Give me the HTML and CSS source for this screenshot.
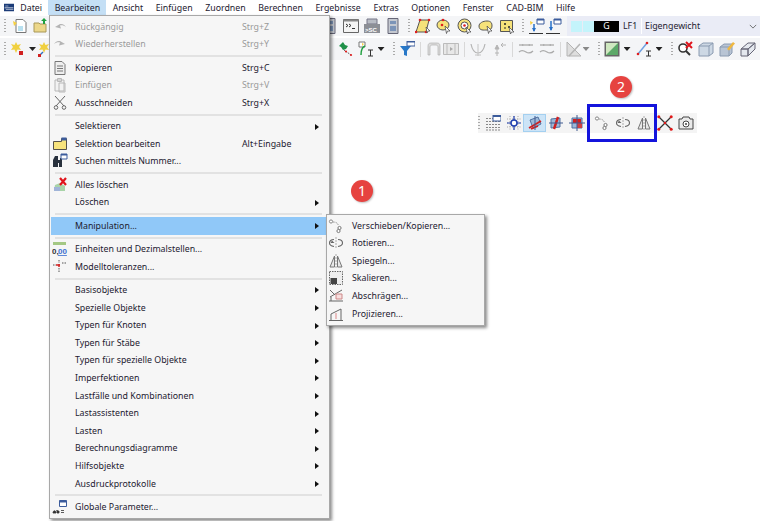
FILE: index.html
```html
<!DOCTYPE html>
<html lang="de">
<head>
<meta charset="utf-8">
<title>Bearbeiten</title>
<link rel="stylesheet" href="styles.css">
</head>
<body>
<svg class="defs" width="0" height="0">
  <defs>
    <symbol id="undo" viewBox="0 0 16 16"><path d="M3 8 8 5c3-.5 5 1 6 3-2-1.500-4-2-6-1.500l1 3z" fill="#b4b4b4"/></symbol>
    <symbol id="redo" viewBox="0 0 16 16"><path d="M13 8 8 5C5 4.500 3 6 2 8c2-1.500 4-2 6-1.500l-1 3z" fill="#b4b4b4"/></symbol>
    <symbol id="copy" viewBox="0 0 16 16"><path d="M3 1.500h7l3 3v10H3zM5 6h6M5 8.500h6M5 11h6" fill="#eee" stroke="#777"/></symbol>
    <symbol id="paste" viewBox="0 0 16 16"><path d="M3 3h9v11H3z M7 6h6v9H7zM5.500 1.500h4v3h-4z" fill="#f2f2f2" stroke="#b8b8b8"/></symbol>
    <symbol id="scissors" viewBox="0 0 16 16"><path d="M3 1l9 10M13 1 4 11" stroke="#666" fill="none"/><circle cx="4" cy="12.500" r="1.800" fill="none" stroke="#666"/><circle cx="12" cy="12.500" r="1.800" fill="none" stroke="#666"/></symbol>
    <symbol id="selfolder" viewBox="0 0 16 16"><path d="M1.500 5.500h8v-3h5v11h-13z" fill="#f7e37c" stroke="#56524a"/><path d="M9.500 1.500h5v3h-5z" fill="#3c5c9c"/></symbol>
    <symbol id="binoc" viewBox="0 0 16 16"><path d="M1 14V7l2-4h3v4h2V5h2v9H7v-4H6v4z" fill="#28303c"/><path d="M9 1h6v5H9z" fill="#fff" stroke="#3c5c9c"/><path d="M9 1h6v1.500H9z" fill="#3c5c9c"/></symbol>
    <symbol id="clear" viewBox="0 0 16 16"><path d="M2 14l1-6 5-2 5 3v5z" fill="#a8d4a8"/><path d="M2 10h6v4H2z" fill="#a0b4d8"/><path d="m8 1 6 7m0-7-6 7" stroke="#e0141c" stroke-width="2.200"/></symbol>
    <symbol id="units" viewBox="0 0 16 16"><path d="M1 1h13v3H1z" fill="#a4c884"/><text x="0" y="13" class="ic-t">0,</text><text x="6" y="13" class="ic-b">00</text></symbol>
    <symbol id="toler" viewBox="0 0 16 16"><path d="M7 1v3M7 9v5M1 6h3M10 4h5" stroke="#555" fill="none" stroke-dasharray="1.500 1"/><path d="M7 5v3M4 6h4" stroke="#d02020" stroke-width="1.500"/></symbol>
    <symbol id="param" viewBox="0 0 16 16"><path d="M7.500 1.500h7v6h-7z" fill="#fff" stroke="#3c5c9c"/><path d="M7.500 1.500h7v2h-7z" fill="#3c5c9c"/><path d="M1 14c0-3 3-3 3 0zM5 11v3h2v-2H5zM9 11.500h3M9 13.500h3" fill="#333" stroke="#333" stroke-width=".8"/></symbol>
    <symbol id="move" viewBox="0 0 16 16"><circle cx="3" cy="3.500" r="1.600" fill="#fff" stroke="#888"/><circle cx="11.500" cy="10" r="1.600" fill="#fff" stroke="#777"/><circle cx="10.500" cy="13" r="1.600" fill="#fff" stroke="#777"/><path d="M5 4c3 0 5 1 5.500 4" fill="none" stroke="#999" stroke-dasharray="1.500 1"/></symbol>
    <symbol id="rotate" viewBox="0 0 16 16"><path d="M8 2v12" stroke="#aaa" stroke-dasharray="2 1"/><path d="M6 4.500C3 4.500 1.500 6 1.500 8S3 11 6 11.500M10 4.500c3 0 4.500 1.500 4.500 3.500S13 11 10 11.500" fill="none" stroke="#666" stroke-width="1.100"/><path d="M4 5.500 6.500 8H2.500z" fill="#666"/></symbol>
    <symbol id="mirror" viewBox="0 0 16 16"><path d="M6.500 3 2 14h4.500zM9.500 3 14 14H9.500z" fill="#e8e8e8" stroke="#777"/><path d="M8 1v14" stroke="#aaa" stroke-dasharray="2 1"/></symbol>
    <symbol id="scale" viewBox="0 0 16 16"><path d="M1.500 1.500h13v13h-13z" fill="#eee" stroke="#666" stroke-dasharray="1.500 1"/><path d="M2.500 8h6.500v6H2.500z" fill="#444"/></symbol>
    <symbol id="shear" viewBox="0 0 16 16"><path d="M1 13h14M3 13V9M14 2 2 9" stroke="#666" fill="none"/><path d="M2 2l5 5" stroke="#666"/><path d="M8 6h6v5H8z" fill="#f7dede" stroke="#c88"/></symbol>
    <symbol id="project" viewBox="0 0 16 16"><path d="M1 14.500h14M3 14.500V8l10-5v11.500" fill="none" stroke="#666"/><path d="M8 7v6" stroke="#d88"/></symbol>
    <symbol id="doc" viewBox="0 0 16 16"><path d="M4 1.500h7l3 3v10H4z" fill="#fff" stroke="#777"/><path d="M1 3l4 2-3 3z" fill="#f6d040"/><path d="M6 8h5v5H6z" fill="#b8e0f0"/></symbol>
    <symbol id="folder" viewBox="0 0 16 16"><path d="M1 5h5l1 1h6v8H1z" fill="#ecd78a" stroke="#a89858"/><path d="M11 0l3 3h-2v3h-2V3H8z" fill="#20a040"/></symbol>
    <symbol id="star" viewBox="0 0 16 16"><path d="M6 1l1.500 3L11 3 9 6l2 3-3.500-.5L6 12 4.500 8.500 1 9l2-3-2-3 3.500 1z" fill="#f0d040"/><path d="M9 10h4v4H9z" fill="#d02020"/></symbol>
    <symbol id="star2" viewBox="0 0 16 16"><path d="M6 1l1.500 3L11 3 9 6l2 3-3.500-.5L6 12 4.500 8.500 1 9l2-3-2-3 3.500 1z" fill="#f0d040"/><path d="M1 15l4-4" stroke="#3070c0" stroke-width="1.500"/><path d="M0 13h3v3H0z" fill="#d02020"/></symbol>
    <symbol id="cmd" viewBox="0 0 16 16"><path d="M.500 1.500h15v13H.500z" fill="#f4f4f4" stroke="#666"/><path d="M.500 1.500h15v2H.500z" fill="#888"/><path d="m3 6 2 1.500L3 9m3-3 2 1.500L6 9m3 1.500h3" fill="none" stroke="#333"/></symbol>
    <symbol id="sc" viewBox="0 0 16 16"><path d="M3 1h10v5H3z" fill="#b8bcc4" stroke="#778"/><path d="M0 6h16v9H0z" fill="#8c8f96"/><text x="1" y="13.500" class="ic-s">&gt;SC</text></symbol>
    <symbol id="form" viewBox="0 0 16 16"><path d="M3 .500h10v15H3z" fill="#c4c8d0" stroke="#667"/><path d="M5 3h6v3H5zM5 8h6v5H5z" fill="#7c94b8"/></symbol>
    <symbol id="poly" viewBox="0 0 16 16"><path d="M5 2h9l-3 12H1z" fill="#f6e27a" stroke="#555"/><g fill="#e02020"><circle cx="5" cy="2" r="1.300"/><circle cx="14" cy="2" r="1.300"/><circle cx="1" cy="14" r="1.300"/><circle cx="11" cy="14" r="1.300"/></g><path d="m11 9 4 4-2 0-1 2z" fill="#fff" stroke="#444" stroke-width=".7"/></symbol>
    <symbol id="ell" viewBox="0 0 16 16"><ellipse cx="7" cy="7" rx="6" ry="5" fill="#f6e27a" stroke="#555"/><circle cx="7" cy="2" r="1.300" fill="#e02020"/><circle cx="6" cy="7" r="1.300" fill="#e02020"/><path d="m9 8 5 5-2.500 0-1 2.500z" fill="#fff" stroke="#444" stroke-width=".7"/></symbol>
    <symbol id="ring" viewBox="0 0 16 16"><circle cx="7.500" cy="7.500" r="6.500" fill="#f6e27a" stroke="#555"/><circle cx="7.500" cy="7.500" r="3.500" fill="#fff" stroke="#555"/><circle cx="7.500" cy="7.500" r="1.300" fill="#e02020"/><path d="m9 9 5 5-2.500 0-1 2z" fill="#fff" stroke="#444" stroke-width=".7"/></symbol>
    <symbol id="blob" viewBox="0 0 16 16"><path d="M1 8c0-3 4-5 8-5s5 2 5 5-2 4-5 4-8 1-8-4z" fill="#f6e27a" stroke="#555"/><path d="m9 8 5 5-2.500 0-1 2.500z" fill="#fff" stroke="#444" stroke-width=".7"/></symbol>
    <symbol id="grid2" viewBox="0 0 16 16"><path d="M1.500 2.500h12v11h-12z" fill="#f6e27a" stroke="#555"/><path d="M5 6h2M6 5v2M9 9h2M10 8v2M5 10h2" stroke="#222"/><path d="m10 9 5 5-2.500 0-1 2z" fill="#fff" stroke="#444" stroke-width=".7"/></symbol>
    <symbol id="loadup" viewBox="0 0 16 16"><path d="M8 1h7v5H8z" fill="#fff" stroke="#3c5c9c"/><path d="M8 1h7v1.500H8z" fill="#3c5c9c"/><path d="M1 3l3 1.500L1.500 7z" fill="#f6d040"/><path d="M5 6v7" stroke="#2870c8" stroke-width="1.500"/><path d="m3 10 2 4 2-4z" fill="#2870c8"/><path d="M0 15.500h14" stroke="#333"/></symbol>
    <symbol id="loaddn" viewBox="0 0 16 16"><path d="M8 1h7v5H8z" fill="#fff" stroke="#3c5c9c"/><path d="M8 1h7v1.500H8z" fill="#3c5c9c"/><path d="M5 3v9" stroke="#2870c8" stroke-width="1.500"/><path d="m3 9 2 4 2-4z" fill="#2870c8"/><path d="M0 15.500h14" stroke="#333"/></symbol>
    <symbol id="green" viewBox="0 0 16 16"><path d="M6 1l2 3 3 1-2 3-3 1-2-3-2-1 2-2z" fill="#1e9048"/><path d="M7 9l7 5" stroke="#555" stroke-dasharray="1.500 1"/><g fill="#e02020"><circle cx="9" cy="10.500" r="1.100"/><circle cx="14" cy="14" r="1.100"/></g></symbol>
    <symbol id="wiz" viewBox="0 0 16 16"><path d="M1 1h6v5H1z" fill="#fff" stroke="#777"/><path d="M3 14C3 9 4 6 7 5" fill="none" stroke="#20a040" stroke-width="1.500"/><path d="M4 2l2 1-2 2z" fill="#f6d040"/><path d="M10 9h5M12.500 9v6M10 15h5" stroke="#333" fill="none"/></symbol>
    <symbol id="funnel" viewBox="0 0 16 16"><path d="M1 5h11L8 10v5l-3-1v-4z" fill="#2878c8"/><path d="M8 0h8v5H8z" fill="#fff" stroke="#3c5c9c"/><path d="M8 0h8v1.500H8z" fill="#3c5c9c"/></symbol>
    <symbol id="arch" viewBox="0 0 16 16"><path d="M2 14V5c0-2 1-3 3-3h6c2 0 3 1 3 3v9h-2V6c0-1-1-2-2-2H6C5 4 4 5 4 6v8z" fill="#dcdcdc" stroke="#aaa" stroke-width=".6"/></symbol>
    <symbol id="film" viewBox="0 0 16 16"><path d="M.500 2.500h15v11H.500z" fill="#e8e8e8" stroke="#bbb"/><path d="M4 2.500v11M12 2.500v11" stroke="#bbb"/><path d="m7 6 3 2-3 2z" fill="#aaa"/></symbol>
    <symbol id="curve" viewBox="0 0 16 16"><path d="M1 3c1 5 3 9 7 9s6-4 7-9" fill="none" stroke="#b4b4b4" stroke-width="1.200"/><path d="M8 3v12M5 14h6" stroke="#c4c4c4"/></symbol>
    <symbol id="upar" viewBox="0 0 16 16"><path d="M6 6v9M4 12h4M4 8l2-4 2 4z" stroke="#b4b4b4" fill="#b4b4b4"/><path d="M10 4h5M12 2 10 4l2 2" stroke="#b4b4b4" fill="none"/></symbol>
    <symbol id="beam" viewBox="0 0 16 16"><path d="M1 4h14" stroke="#b4b4b4" stroke-width="1.500" stroke-dasharray="4 1"/><path d="M1 11c2-2 4-2 7 0s5 1 7-1" fill="none" stroke="#aaa" stroke-width="1.200"/><circle cx="5" cy="4" r="1" fill="#aaa"/><circle cx="11" cy="4" r="1" fill="#aaa"/></symbol>
    <symbol id="angle" viewBox="0 0 16 16"><path d="M1 1v14h14z" fill="#dedede" stroke="#b4b4b4"/><path d="M3 15 14 3" stroke="#b4b4b4" stroke-width="1.500"/></symbol>
    <symbol id="gradbox" viewBox="0 0 16 16"><path d="M.500 .500h15v15H.500z" fill="#666"/><path d="M2 2h12v12H2z" fill="#cfe8c0"/><path d="M14 2v12H2z" fill="#5ca868"/></symbol>
    <symbol id="linei" viewBox="0 0 16 16"><path d="M2 13 11 2" stroke="#70a0e0" stroke-width="1.500"/><circle cx="2" cy="13" r="1.300" fill="#e02020"/><circle cx="11" cy="2" r="1.300" fill="#e02020"/><path d="M10 10h5M12.500 10v5M10 15h5" stroke="#333" fill="none"/></symbol>
    <symbol id="searchx" viewBox="0 0 16 16"><circle cx="6" cy="7" r="4" fill="#fff" stroke="#333" stroke-width="1.600"/><path d="m9 10 4 4" stroke="#333" stroke-width="2"/><path d="m9 1 6 6m0-6-6 6" stroke="#e0141c" stroke-width="2"/></symbol>
    <symbol id="cube" viewBox="0 0 16 16"><path d="M1 5l4-3h10v10l-4 3H1zM1 5h10v10M11 5l4-3" fill="#cdd8e4" stroke="#8a9ab0"/></symbol>
    <symbol id="cubepen" viewBox="0 0 16 16"><path d="M1 6l4-3h8v9l-3 3H1zM1 6h9v9M10 6l3-3" fill="#b8c4d4" stroke="#8a9ab0"/><path d="m8 8 6-7 2 1.500-6 7z" fill="#f0b840"/></symbol>
    <symbol id="cubetube" viewBox="0 0 16 16"><path d="M1 8h7v7H1zM1 8l7-6h7l-7 6zM8 8l7-6v6l-7 7z" fill="#e4e8ee" stroke="#667"/></symbol>
    <symbol id="gridw" viewBox="0 0 16 16"><path d="M1 3.500h2M4 3.500h2M7 3.500h2M1 6.500h14M1 9.500h14M1 12.500h14M1 15h14" stroke="#888" stroke-dasharray="2 1"/><path d="M8 0h8v6H8z" fill="#fff" stroke="#3c5c9c"/><path d="M8 0h8v2H8z" fill="#3c5c9c"/></symbol>
    <symbol id="node" viewBox="0 0 16 16"><path d="M1 4h14M1 8h14M1 12h14M4 1v14M8 1v14M12 1v14" stroke="#aaa" stroke-dasharray="1 1.500"/><path d="M8 1v14M1 8h14" stroke="#2040b0" stroke-width="1.200"/><circle cx="8" cy="8" r="3" fill="#fff" stroke="#2040b0" stroke-width="1.500"/></symbol>
    <symbol id="pln1" viewBox="0 0 16 16"><path d="M3 5l8-3 3 7-8 4z" fill="#9cb8d8" stroke="#5070a0"/><path d="M2 13 14 6M4 14l7-3" stroke="#d02020" stroke-width="1.800"/><path d="M8 1v14" stroke="#405a90"/></symbol>
    <symbol id="pln2" viewBox="0 0 16 16"><path d="M3 4l9-1v9l-9 1z" fill="#9cb8d8" stroke="#5070a0"/><path d="M10 2 6 14" stroke="#d02020" stroke-width="2.400"/><path d="M1 8h14" stroke="#405a90"/></symbol>
    <symbol id="pln3" viewBox="0 0 16 16"><path d="M3 3h10v10H3z" fill="#9cb8d8" stroke="#5070a0"/><path d="M4 4h8v4H4z" fill="#d02020"/><path d="M8 8h5v5H8z" fill="#d04040"/><path d="M8 0v16M0 8h16" stroke="#405a90"/></symbol>
    <symbol id="crossx" viewBox="0 0 16 16"><path d="m1.500 1.500 13 13m0-13-13 13" stroke="#333" stroke-width="1.300"/><g fill="#e01818"><circle cx="1.800" cy="1.800" r="1.500"/><circle cx="14.200" cy="1.800" r="1.500"/><circle cx="1.800" cy="14.200" r="1.500"/><circle cx="14.200" cy="14.200" r="1.500"/><circle cx="8" cy="8" r="1.200"/></g></symbol>
    <symbol id="camera" viewBox="0 0 16 16"><path d="M1 4h3l1-2h6l1 2h3v10H1z" fill="#eaeaea" stroke="#444"/><circle cx="8" cy="9" r="3" fill="#fff" stroke="#444"/><circle cx="8" cy="9" r="1" fill="#444"/></symbol>
  </defs>
</svg>

<header class="menubar">
  <svg class="applogo" viewBox="0 0 16 12"><path d="M0 0h16v12H0z" fill="#1c3c78"/><path d="M2 3h5v1H2zM1 6h14v1H1zM3 9h12v1H3z" fill="#fff"/></svg>
  <span class="mb-item">Datei</span>
  <span class="mb-item mb-open">Bearbeiten</span>
  <span class="mb-item">Ansicht</span>
  <span class="mb-item">Einfügen</span>
  <span class="mb-item">Zuordnen</span>
  <span class="mb-item">Berechnen</span>
  <span class="mb-item">Ergebnisse</span>
  <span class="mb-item">Extras</span>
  <span class="mb-item">Optionen</span>
  <span class="mb-item">Fenster</span>
  <span class="mb-item">CAD-BIM</span>
  <span class="mb-item">Hilfe</span>
</header>

<div class="toolbars">
  <div class="tb tb1">
    <i class="grip"></i>
    <svg class="ic"><use href="#doc"/></svg>
    <svg class="ic"><use href="#folder"/></svg>
    <span class="tb-under tb1-under"></span>
    <svg class="ic"><use href="#form"/></svg>
    <svg class="ic"><use href="#cmd"/></svg>
    <svg class="ic"><use href="#sc"/></svg>
    <svg class="ic"><use href="#form"/></svg>
    <i class="grip"></i>
    <svg class="ic"><use href="#poly"/></svg>
    <svg class="ic"><use href="#ell"/></svg>
    <svg class="ic"><use href="#ring"/></svg>
    <svg class="ic"><use href="#blob"/></svg>
    <svg class="ic"><use href="#grid2"/></svg>
    <i class="grip"></i>
    <svg class="ic"><use href="#loadup"/></svg>
    <svg class="ic ic-tight"><use href="#loaddn"/></svg>
    <div class="lf">
      <span class="sw"></span><span class="sw"></span>
      <span class="lf-g">G</span>
      <span class="lf-n">LF1</span>
      <span class="lf-d">Eigengewicht</span>
      <svg class="chev" viewBox="0 0 10 6"><path d="m1 1 4 4 4-4" fill="none" stroke="#555"/></svg>
    </div>
  </div>
  <div class="tb tb2">
    <i class="grip"></i>
    <svg class="ic"><use href="#star"/></svg>
    <i class="drop drop-near"></i>
    <svg class="ic"><use href="#star2"/></svg>
    <span class="tb-under tb2-under"></span>
    <svg class="ic"><use href="#green"/></svg>
    <svg class="ic"><use href="#wiz"/></svg>
    <i class="drop"></i>
    <i class="grip"></i>
    <svg class="ic"><use href="#funnel"/></svg>
    <i class="bar"></i>
    <svg class="ic"><use href="#arch"/></svg>
    <svg class="ic ic-tight"><use href="#film"/></svg>
    <i class="bar"></i>
    <svg class="ic"><use href="#curve"/></svg>
    <svg class="ic"><use href="#upar"/></svg>
    <i class="bar"></i>
    <svg class="ic"><use href="#beam"/></svg>
    <svg class="ic"><use href="#beam"/></svg>
    <i class="bar"></i>
    <svg class="ic"><use href="#angle"/></svg>
    <i class="drop off"></i>
    <i class="grip"></i>
    <svg class="ic"><use href="#gradbox"/></svg>
    <i class="drop"></i>
    <svg class="ic"><use href="#linei"/></svg>
    <i class="drop"></i>
    <i class="grip"></i>
    <svg class="ic"><use href="#searchx"/></svg>
    <svg class="ic"><use href="#cube"/></svg>
    <svg class="ic"><use href="#cubepen"/></svg>
    <svg class="ic"><use href="#cubetube"/></svg>
  </div>
</div>

<div class="float-tb">
  <i class="grip"></i>
  <svg class="ic"><use href="#gridw"/></svg>
  <svg class="ic"><use href="#node"/></svg>
  <span class="ic-on"><svg class="ic"><use href="#pln1"/></svg></span>
  <svg class="ic"><use href="#pln2"/></svg>
  <svg class="ic"><use href="#pln3"/></svg>
  <svg class="ic gap-l"><use href="#move"/></svg>
  <svg class="ic"><use href="#rotate"/></svg>
  <svg class="ic"><use href="#mirror"/></svg>
  <svg class="ic"><use href="#crossx"/></svg>
  <svg class="ic"><use href="#camera"/></svg>
</div>
<div class="frame"></div>
<span class="badge badge-1">1</span>
<span class="badge badge-2">2</span>

<nav class="menu main-menu">
  <div class="mi off"><svg class="mic"><use href="#undo"/></svg><span class="lb">Rückgängig</span><span class="sc">Strg+Z</span></div>
  <div class="mi off"><svg class="mic"><use href="#redo"/></svg><span class="lb">Wiederherstellen</span><span class="sc">Strg+Y</span></div>
  <hr class="sep">
  <div class="mi"><svg class="mic"><use href="#copy"/></svg><span class="lb">Kopieren</span><span class="sc">Strg+C</span></div>
  <div class="mi off"><svg class="mic"><use href="#paste"/></svg><span class="lb">Einfügen</span><span class="sc">Strg+V</span></div>
  <div class="mi"><svg class="mic"><use href="#scissors"/></svg><span class="lb">Ausschneiden</span><span class="sc">Strg+X</span></div>
  <hr class="sep">
  <div class="mi sub"><span class="mic"></span><span class="lb">Selektieren</span></div>
  <div class="mi"><svg class="mic"><use href="#selfolder"/></svg><span class="lb">Selektion bearbeiten</span><span class="sc">Alt+Eingabe</span></div>
  <div class="mi"><svg class="mic"><use href="#binoc"/></svg><span class="lb">Suchen mittels Nummer...</span></div>
  <hr class="sep">
  <div class="mi"><svg class="mic"><use href="#clear"/></svg><span class="lb">Alles löschen</span></div>
  <div class="mi sub"><span class="mic"></span><span class="lb">Löschen</span></div>
  <hr class="sep">
  <div class="mi sub active"><span class="mic"></span><span class="lb">Manipulation...</span></div>
  <hr class="sep">
  <div class="mi"><svg class="mic"><use href="#units"/></svg><span class="lb">Einheiten und Dezimalstellen...</span></div>
  <div class="mi"><svg class="mic"><use href="#toler"/></svg><span class="lb">Modelltoleranzen...</span></div>
  <hr class="sep">
  <div class="mi sub"><span class="mic"></span><span class="lb">Basisobjekte</span></div>
  <div class="mi sub"><span class="mic"></span><span class="lb">Spezielle Objekte</span></div>
  <div class="mi sub"><span class="mic"></span><span class="lb">Typen für Knoten</span></div>
  <div class="mi sub"><span class="mic"></span><span class="lb">Typen für Stäbe</span></div>
  <div class="mi sub"><span class="mic"></span><span class="lb">Typen für spezielle Objekte</span></div>
  <div class="mi sub"><span class="mic"></span><span class="lb">Imperfektionen</span></div>
  <div class="mi sub"><span class="mic"></span><span class="lb">Lastfälle und Kombinationen</span></div>
  <div class="mi sub"><span class="mic"></span><span class="lb">Lastassistenten</span></div>
  <div class="mi sub"><span class="mic"></span><span class="lb">Lasten</span></div>
  <div class="mi sub"><span class="mic"></span><span class="lb">Berechnungsdiagramme</span></div>
  <div class="mi sub"><span class="mic"></span><span class="lb">Hilfsobjekte</span></div>
  <div class="mi sub"><span class="mic"></span><span class="lb">Ausdruckprotokolle</span></div>
  <hr class="sep">
  <div class="mi"><svg class="mic"><use href="#param"/></svg><span class="lb">Globale Parameter...</span></div>
</nav>

<nav class="menu sub-menu">
  <div class="mi"><svg class="mic"><use href="#move"/></svg><span class="lb">Verschieben/Kopieren...</span></div>
  <div class="mi"><svg class="mic"><use href="#rotate"/></svg><span class="lb">Rotieren...</span></div>
  <div class="mi"><svg class="mic"><use href="#mirror"/></svg><span class="lb">Spiegeln...</span></div>
  <div class="mi"><svg class="mic"><use href="#scale"/></svg><span class="lb">Skalieren...</span></div>
  <div class="mi"><svg class="mic"><use href="#shear"/></svg><span class="lb">Abschrägen...</span></div>
  <div class="mi"><svg class="mic"><use href="#project"/></svg><span class="lb">Projizieren...</span></div>
</nav>
</body>
</html>
```
FILE: styles.css
```css
* { box-sizing: border-box; }
html, body { margin: 0; height: 100%; }
body {
  position: relative;
  width: 760px;
  height: 521px;
  overflow: hidden;
  background: #fff;
  font-family: "Noto Sans", "Open Sans", sans-serif;
  font-size: 8.8px;
  color: #1c2030;
}
.defs { position: absolute; }
.ic-t { font: bold 8px "Liberation Sans", sans-serif; fill: #333; }
.ic-b { font: bold 8px "Liberation Sans", sans-serif; fill: #3c70d0; text-decoration: underline; }
.ic-s { font: bold 6px "Liberation Sans", sans-serif; fill: #fff; }

.menubar {
  display: flex;
  align-items: flex-start;
  height: 16px;
  padding-left: 4px;
  background: #fff;
}
.applogo { width: 10px; height: 9px; margin-top: 3px; flex: none; }
.mb-item {
  display: flex;
  align-items: center;
  height: 15px;
  padding: 0 6.300px;
  white-space: nowrap;
}
.mb-open { background: #c4dff5; }

.toolbars { display: flex; flex-direction: column; gap: 2px; }
.tb {
  display: flex;
  align-items: center;
  background: #f4f5f7;
  padding-left: 4px;
}
.tb1 { height: 20px; }
.tb2 { height: 22px; }
.ic { width: 16px; height: 16px; margin: 0 2.500px; flex: none; display: block; }
.ic-tight { margin-left: -1.500px; }
.grip {
  flex: none;
  width: 2px;
  height: 15px;
  margin: 0 2px 0 5px;
  background: repeating-linear-gradient(#aaa 0 1px, transparent 1px 3px);
}
.tb > .grip:first-child { margin: 0 3px 0 0; }
.tb2 > .grip:first-child { margin: 0 1px 0 0; }
.drop {
  flex: none;
  width: 7px;
  height: 4px;
  margin: 0 3px 0 1px;
  background: #222;
  clip-path: polygon(0 0, 100% 0, 50% 100%);
}
.drop-near { margin-right: -1px; }
.drop.off { background: #888; margin-left: -2px; }
.bar { flex: none; width: 1px; height: 15px; margin: 0 2.500px; background: #d8d8d8; }
.tb-under { flex: none; }
.tb1-under { width: 268px; }
.tb2-under { width: 278.500px; }

.lf {
  flex: 1;
  align-self: stretch;
  display: flex;
  align-items: center;
  margin-left: 3px;
  padding-left: 4px;
  background: #eaecf6;
}
.sw { width: 11px; height: 11px; background: #c4f4fb; margin-right: .5px; }
.lf-g {
  width: 25px;
  height: 11px;
  line-height: 11px;
  text-align: center;
  background: #000;
  color: #fff;
}
.lf-n { width: 22px; padding-left: 4px; }
.lf-d { flex: 1; padding-left: 3px; border-left: 1px solid #fff; height: 16px; line-height: 16px; }
.chev { width: 8px; height: 5px; margin-right: 3px; }

.float-tb {
  position: absolute;
  left: 478px;
  top: 113px;
  width: 219px;
  height: 20px;
  display: flex;
  align-items: center;
  background: #f4f4f4;
}
.float-tb .grip { margin: 0 2px 0 0; }
.float-tb .gap-l { margin-left: 7px; }
.ic-on { display: flex; background: #cce4f7; outline: 1px solid #a4d0f0; }
.frame {
  position: absolute;
  left: 587px;
  top: 104px;
  width: 70px;
  height: 38px;
  border: 3px solid #1414dc;
}
.badge {
  position: absolute;
  width: 22px;
  height: 22px;
  border-radius: 50%;
  background: #e64340;
  color: #fff;
  font-size: 14px;
  line-height: 22px;
  text-align: center;
  box-shadow: 1px 1px 2px rgba(0,0,0,.25);
}
.badge-1 { left: 351px; top: 180px; }
.badge-2 { left: 610px; top: 76px; }

.menu {
  position: absolute;
  padding: 2px 1px;
  background: #f6f6f6;
  border: 1px solid #a8a8a8;
  box-shadow: 2px 2px 3px rgba(0,0,0,.45);
}
.main-menu { left: 49px; top: 15px; width: 281px; }
.sub-menu { left: 326px; top: 214px; width: 159px; }
.mi {
  position: relative;
  display: flex;
  align-items: center;
  height: 17.6px;
  padding-bottom: .4px;
  white-space: nowrap;
}
.mic { width: 16px; height: 16px; margin: 0 7px 0 1px; flex: none; display: block; }
.lb { flex: none; }
.main-menu .lb { width: 167px; }
.off { color: #9a9a9a; }
.active { background: #90c8f8; }
.sub::after {
  content: "";
  position: absolute;
  right: 9px;
  top: 6px;
  border: 3px solid transparent;
  border-left: 4px solid #111;
  border-right: 0;
}
.sep {
  height: 2px;
  margin: 1.900px 6px 1.900px 4px;
  border: 0;
  background: #e2e2e2;
}
.sub-menu .mic { margin: 0 8px 0 0; }
```
